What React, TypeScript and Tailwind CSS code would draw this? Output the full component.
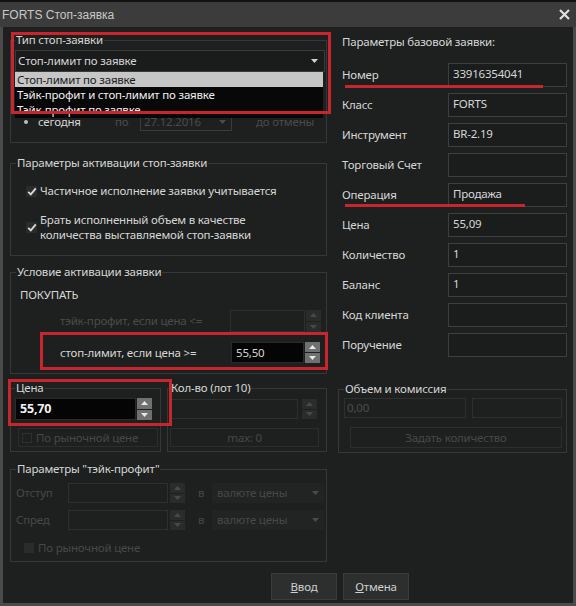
import React from "react";

function Tri({ up, color }: { up: boolean; color: string }) {
  return (
    <svg width="7" height="4" viewBox="0 0 7 4">
      {up ? <polygon points="0,4 7,4 3.5,0" fill={color} /> : <polygon points="0,0 7,0 3.5,4" fill={color} />}
    </svg>
  );
}

function Spin({ on, h }: { on: boolean; h: string }) {
  const half = on ? "flex-1 flex items-center justify-center bg-[#707070]" : "flex-1 flex items-center justify-center bg-[#2a2c2b]";
  const c = on ? "#e8e8e8" : "#484a49";
  return (
    <div className={h + " w-[15px] flex flex-col gap-[1px] ml-[1px]"}>
      <div className={half}>
        <Tri up color={c} />
      </div>
      <div className={half}>
        <Tri up={false} color={c} />
      </div>
    </div>
  );
}

function Check() {
  return (
    <div className="w-[11px] h-[11px] bg-[#2a2c2b] flex items-center justify-center shrink-0">
      <svg width="10" height="9" viewBox="0 0 10 9">
        <path d="M1.2 4.8 L3.8 7.4 L8.8 1.4" stroke="#d8d8d8" strokeWidth="1.9" fill="none" />
      </svg>
    </div>
  );
}

function Row({ label, value }: { label: string; value?: string }) {
  return (
    <div className="flex items-center h-[24px] mt-[6px]">
      <div className="w-[110px] pl-[4px]">{label}</div>
      <div className="w-[119px] h-[24px] border border-[#3d3f3e] bg-[#1b1d1c] pl-[4px] leading-[18px] pt-[1px]">
        {value}
      </div>
    </div>
  );
}

export default function App() {
  return (
    <div className="relative w-[576px] h-[606px] bg-[#4a4a4a] overflow-hidden font-['Noto_Sans',sans-serif] text-[11.5px] tracking-[-0.2px] text-[#d6d6d6]">
      {/* title bar */}
      <div className="h-[27px] bg-[#3c3c3c] border-t-[2px] border-[#121212] flex items-center justify-between pl-[2px] pr-[6px]">
        <span className="font-['Liberation_Sans',sans-serif] text-[12px] tracking-normal text-[#c8c8c8]">FORTS Стоп-заявка</span>
        <svg width="11" height="11" viewBox="0 0 11 11">
          <path d="M1 1 L10 10 M10 1 L1 10" stroke="#e0e0e0" strokeWidth="2.2" />
        </svg>
      </div>

      {/* body */}
      <div className="mx-[3px] h-[576px] bg-[#1e201f] flex flex-col">
        <div className="flex">
          {/* left column */}
          <div className="ml-[7px] w-[317px] flex flex-col">
            {/* A */}
            <fieldset className="mt-[6px] border border-[#363837] pl-[4px] pr-[1px] pt-[3px] pb-[11px]">
              <legend className="px-[1px] leading-[14px]">Тип стоп-заявки</legend>
              <div className="h-[22px] border border-[#3a3a3a] bg-[#1a1b1b] flex items-center justify-between pl-[2px] pr-[6px]">
                <span>Стоп-лимит по заявке</span>
                <Tri up={false} color="#d0d0d0" />
              </div>
              <div className="flex items-center h-[19px] mt-[40px]">
                <span className="ml-[9px] w-[4px] h-[4px] rounded-full bg-[#bdbdbd]" />
                <span className="ml-[10px] w-[77px]">сегодня</span>
                <span className="w-[25px] text-[#4a4c4b]">по</span>
                <div className="w-[92px] h-[19px] border border-[#3a3c3b] flex items-center justify-between pl-[3px] pr-[5px] text-[#4a4c4b]">
                  <span>27.12.2016</span>
                  <Tri up={false} color="#4a4c4b" />
                </div>
                <span className="ml-[24px] text-[#4a4c4b]">до отмены</span>
              </div>
            </fieldset>

            {/* B */}
            <fieldset className="mt-[13px] border border-[#363837] pl-[5px] pt-[13px] pb-[13px]">
              <legend className="px-[1px] leading-[14px]">Параметры активации стоп-заявки</legend>
              <div className="flex items-center h-[16px] ml-[10px] gap-[3px]">
                <Check />
                <span>Частичное исполнение заявки учитывается</span>
              </div>
              <div className="flex items-center ml-[10px] gap-[3px] mt-[13px] leading-[15px]">
                <Check />
                <span>
                  Брать исполненный объем в качестве
                  <br />
                  количества выставляемой стоп-заявки
                </span>
              </div>
            </fieldset>

            {/* C */}
            <fieldset className="mt-[9px] border border-[#363837] pl-[9px] pt-[8px] pb-[10px]">
              <legend className="-ml-[4px] px-[1px] leading-[14px]">Условие активации заявки</legend>
              <div className="leading-[16px]">ПОКУПАТЬ</div>
              <div className="flex items-center h-[22px] mt-[7px]">
                <span className="ml-[40px] w-[170px] text-[#4a4c4b]">тэйк-профит, если цена &lt;=</span>
                <div className="w-[75px] h-[22px] border border-[#2e302f]" />
                <Spin on={false} h="h-[22px]" />
              </div>
              <div className="flex items-center h-[21px] mt-[10px]">
                <span className="ml-[40px] w-[171px]">стоп-лимит, если цена &gt;=</span>
                <div className="w-[73px] h-[21px] bg-[#050505] border border-[#2a2a2a] pl-[4px] leading-[19px]">55,50</div>
                <Spin on h="h-[21px]" />
              </div>
            </fieldset>

            {/* D */}
            <div className="flex mt-[7px] gap-[6px]">
              <fieldset className="w-[151px] border border-[#363837] pl-[4px] pt-[3px] pb-[4px]">
                <legend className="px-[1px] leading-[14px]">Цена</legend>
                <div className="flex items-center h-[22px]">
                  <div className="w-[121px] h-[22px] bg-[#050505] border border-[#2a2a2a] pl-[4px] leading-[20px] font-bold text-[#f2f2f2] text-[12.5px]">
                    55,70
                  </div>
                  <Spin on h="h-[22px]" />
                </div>
                <div className="mt-[8px] ml-[3px] w-[140px] h-[19px] border border-[#2c2e2d] flex items-center text-[#464847]">
                  <span className="ml-[3px] w-[10px] h-[10px] border border-[#2e302f]" />
                  <span className="ml-[4px]">По рыночной цене</span>
                </div>
              </fieldset>
              <fieldset className="w-[160px] border border-[#363837] pl-[2px] pt-[3px] pb-[4px]">
                <legend className="px-[1px] leading-[14px]">Кол-во (лот 10)</legend>
                <div className="flex items-center h-[22px]">
                  <div className="w-[128px] h-[20px] border border-[#2e302f]" />
                  <div className="ml-[3px]">
                    <Spin on={false} h="h-[20px]" />
                  </div>
                </div>
                <div className="mt-[8px] w-[149px] h-[19px] border border-[#2c2e2d] flex items-center justify-center text-[#464847]">
                  max: 0
                </div>
              </fieldset>
            </div>

            {/* E */}
            <fieldset className="mt-[10px] border border-[#363837] pl-[5px] pt-[7px] pb-[5px]">
              <legend className="px-[1px] leading-[14px]">Параметры "тэйк-профит"</legend>
              <div className="flex items-center h-[20px] text-[#464847]">
                <span className="w-[52px]">Отступ</span>
                <div className="w-[100px] h-[20px] border border-[#2e302f]" />
                <div className="ml-[1px]">
                  <Spin on={false} h="h-[20px]" />
                </div>
                <span className="ml-[13px] w-[14px]">в</span>
                <div className="w-[112px] h-[20px] bg-[#222423] flex items-center justify-between pl-[5px] pr-[5px]">
                  <span>валюте цены</span>
                  <Tri up={false} color="#4a4c4b" />
                </div>
              </div>
              <div className="flex items-center h-[20px] mt-[7px] text-[#464847]">
                <span className="w-[52px]">Спред</span>
                <div className="w-[100px] h-[20px] border border-[#2e302f]" />
                <div className="ml-[1px]">
                  <Spin on={false} h="h-[20px]" />
                </div>
                <span className="ml-[13px] w-[14px]">в</span>
                <div className="w-[112px] h-[20px] bg-[#222423] flex items-center justify-between pl-[5px] pr-[5px]">
                  <span>валюте цены</span>
                  <Tri up={false} color="#4a4c4b" />
                </div>
              </div>
              <div className="flex items-center h-[16px] mt-[10px] ml-[8px] text-[#464847]">
                <span className="w-[10px] h-[10px] bg-[#2a2c2b]" />
                <span className="ml-[4px]">По рыночной цене</span>
              </div>
            </fieldset>
          </div>

          {/* right column */}
          <div className="ml-[11px] w-[229px] flex flex-col">
            <div className="mt-[7px] pl-[4px] leading-[16px]">Параметры базовой заявки:</div>
            <div className="mt-[7px]" />
            <Row label="Номер" value="33916354041" />
            <Row label="Класс" value="FORTS" />
            <Row label="Инструмент" value="BR-2.19" />
            <Row label="Торговый Счет" />
            <Row label="Операция" value="Продажа" />
            <Row label="Цена" value="55,09" />
            <Row label="Количество" value="1" />
            <Row label="Баланс" value="1" />
            <Row label="Код клиента" />
            <Row label="Поручение" />
            <fieldset className="mt-[25px] border border-[#363837] pl-[5px] pr-[4px] pt-[2px] pb-[4px]">
              <legend className="px-[1px] leading-[14px]">Объем и комиссия</legend>
              <div className="flex gap-[6px]">
                <div className="w-[122px] h-[20px] border border-[#2e302f] pl-[2px] leading-[18px] text-[#4a4c4b]">0,00</div>
                <div className="w-[90px] h-[20px] border border-[#2e302f]" />
              </div>
              <div className="mt-[9px] ml-[6px] w-[212px] h-[21px] border border-[#2c2e2d] flex items-center justify-center text-[#464847]">
                Задать количество
              </div>
            </fieldset>
          </div>
        </div>

        {/* buttons */}
        <div className="flex gap-[6px] ml-[268px] mt-[11px]">
          <div className="w-[66px] h-[27px] bg-[#2d2f2e] border border-[#3a3c3b] flex items-center justify-center text-[#d0d0d0]">
            <span><span className="underline">В</span>вод</span>
          </div>
          <div className="w-[66px] h-[27px] bg-[#2d2f2e] border border-[#3a3c3b] flex items-center justify-center text-[#d0d0d0]">
            <span><span className="underline">О</span>тмена</span>
          </div>
        </div>
      </div>

      {/* dropdown list overlay */}
      <div className="absolute left-[15px] top-[72px] w-[308px] h-[46px] bg-[#080808] leading-[15px]">
        <div className="h-[15px] bg-[#c6c6c6] text-[#1c1c1c] pl-[2px]">Стоп-лимит по заявке</div>
        <div className="h-[15px] text-[#f0f0f0] pl-[2px]">Тэйк-профит и стоп-лимит по заявке</div>
        <div className="h-[15px] text-[#f0f0f0] pl-[2px]">Тэйк-профит по заявке</div>
      </div>

      {/* red annotations */}
      <div className="absolute left-[11px] top-[32px] w-[320px] h-[82px] border-[3px] border-[#c8262e]" />
      <div className="absolute left-[40px] top-[332px] w-[288px] h-[38px] border-[3px] border-[#c8262e]" />
      <div className="absolute left-[8px] top-[379px] w-[164px] h-[47px] border-[3px] border-[#c8262e]" />
      <div className="absolute left-[345px] top-[85px] w-[198px] h-[3px] bg-[#c8262e]" />
      <div className="absolute left-[345px] top-[204px] w-[180px] h-[3px] bg-[#c8262e]" />
    </div>
  );
}
